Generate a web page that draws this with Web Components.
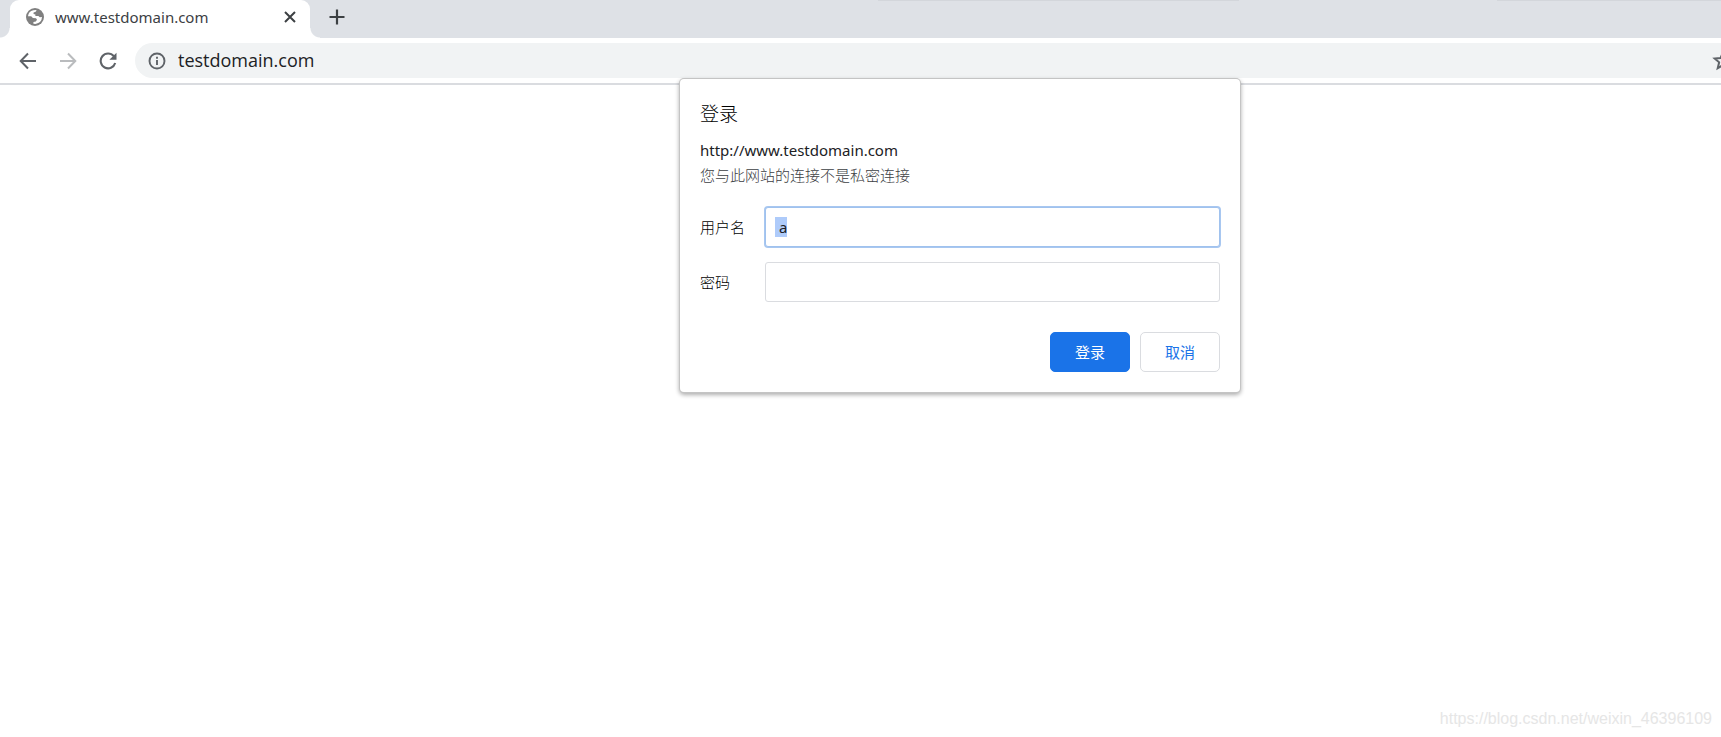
<!DOCTYPE html>
<html lang="zh-CN">
<head>
<meta charset="utf-8">
<title>www.testdomain.com</title>
<style>
html, body { height: 100%; margin: 0; }
body { background: #fff; color: #202124; overflow: hidden; font-family: "Open Sans", "Noto Sans CJK SC", sans-serif; }
</style>
</head>
<body>
<browser-window>
  <tab-strip slot="tabs"><browser-tab>www.testdomain.com</browser-tab></tab-strip>
  <nav-toolbar slot="toolbar" url="testdomain.com"></nav-toolbar>
  <login-dialog></login-dialog>
  <page-credit slot="credit">https://blog.csdn.net/weixin_46396109</page-credit>
</browser-window>
<script>
const define = (name, html, setup) => customElements.define(name, class extends HTMLElement {
  constructor() {
    super();
    this.attachShadow({ mode: 'open' }).innerHTML = html;
  }
  connectedCallback() { if (setup) setup(this, this.shadowRoot); }
});

define('browser-window', `
<style>
:host { display: flex; flex-direction: column; min-height: 100vh; position: relative; overflow: hidden; }
main { flex: 1; display: flex; flex-direction: column; justify-content: flex-end; align-items: flex-end; }
</style>
<slot name="tabs"></slot>
<slot name="toolbar"></slot>
<main><slot></slot><slot name="credit"></slot></main>`);

define('tab-strip', `
<style>
:host { display: flex; height: 38px; padding-left: 10px; background: #dee1e6; position: relative; }
button { border: 0; padding: 0; background: none; width: 36px; height: 34px; margin-left: 9px; display: grid; place-items: center; }
.edge { position: absolute; top: 0; height: 1px; background: #d3d6db; }
.one { left: 51%; width: 21%; }
.two { left: 87%; right: 0; }
</style>
<slot></slot>
<button aria-label="新标签页"><svg width="16" height="16" viewBox="0 0 16 16"><path d="M8 .5v15M.5 8h15" stroke="#3c4043" stroke-width="2.2"/></svg></button>
<div class="edge one"></div><div class="edge two"></div>`);

define('browser-tab', `
<style>
:host { display: flex; align-items: center; box-sizing: border-box; width: 300px; height: 38px; padding: 0 12px 4px 16px; background: #fff; border-radius: 9px 9px 0 0; position: relative; color: #3c4043; font-family: "Noto Sans", sans-serif; font-size: 15px; }
:host::before, :host::after { content: ""; position: absolute; bottom: 0; width: 10px; height: 10px; }
:host::before { right: 100%; background: radial-gradient(circle at 0 0, transparent 9px, #fff 10px); }
:host::after { left: 100%; background: radial-gradient(circle at 100% 0, transparent 9px, #fff 10px); }
span { flex: 1; margin-left: 11px; white-space: nowrap; }
button { border: 0; padding: 0; background: none; width: 16px; height: 16px; display: grid; place-items: center; }
</style>
<svg width="18" height="18" viewBox="0 0 18 18"><circle cx="9" cy="9" r="9" fill="#808080"/><path fill="#fff" d="M2 8.2Q2.5 3.4 7.3 2.2L10.2 2.1Q11 3 9.6 3.7L7.6 4.6Q7.1 5.7 8 6.3H9.3L9.4 8H12.4L13.8 9.2 16 9.1Q15.8 14.9 9.4 16.1L7.4 15.8V14L9.8 13.5 11 11.8 10 10.3 6.9 10 5.2 8.3Z"/></svg>
<span><slot></slot></span>
<button aria-label="关闭"><svg width="12" height="12" viewBox="0 0 12 12"><path d="m1 1 10 10M11 1 1 11" stroke="#3c4043" stroke-width="2"/></svg></button>`);

define('nav-toolbar', `
<style>
:host { display: flex; align-items: center; box-sizing: border-box; height: 47px; padding: 5px 0 5px 8px; border-bottom: 2px solid #dadce0; background: #fff; }
button { flex: none; border: 0; padding: 0; background: none; width: 40px; height: 34px; display: grid; place-items: center; color: #5f6368; }
button:disabled { color: #babcbe; }
.omnibox { flex: 1; display: flex; align-items: center; height: 35px; margin: 0 -14px 0 7px; padding-left: 13px; border-radius: 18px 0 0 18px; background: #f1f3f4; }
.omnibox svg { flex: none; }
input { flex: 1; min-width: 0; height: 34px; border: 0; outline: 0; background: none; padding: 0 0 2px; box-sizing: border-box; margin-left: 12px; font: 18px "Open Sans", "Noto Sans CJK SC", sans-serif; color: #202124; }
.star { width: 24px; }
</style>
<button aria-label="后退"><svg width="18" height="18" viewBox="0 0 18 18" fill="none" stroke="currentColor" stroke-width="2"><path d="M17 9H2M9 1.5 1.7 9 9 16.5"/></svg></button>
<button aria-label="前进" disabled><svg width="18" height="18" viewBox="0 0 18 18" fill="none" stroke="currentColor" stroke-width="2"><path d="M1 9h15M9 1.5 16.3 9 9 16.5"/></svg></button>
<button aria-label="重新加载"><svg width="18" height="18" viewBox="0 0 18 18"><path d="M14.8 4.2A7.4 7.4 0 1 0 16.2 11" fill="none" stroke="currentColor" stroke-width="2.1"/><path d="M17.5.7v7.1h-7.1z" fill="currentColor"/></svg></button>
<div class="omnibox">
<svg width="18" height="18" viewBox="0 0 18 18"><circle cx="9" cy="9" r="7.5" fill="none" stroke="#5f6368" stroke-width="1.9"/><path d="M9 8v5M9 4.7v2" stroke="#5f6368" stroke-width="1.9"/></svg>
<input type="text" aria-label="地址栏">
<button class="star" aria-label="为此标签页添加书签"><svg width="22" height="22" viewBox="0 0 20 20" fill="none" stroke="#5f6368" stroke-width="1.8"><path d="m10 2.2 2.2 5 5.4.5-4.1 3.5 1.3 5.4-4.8-2.9-4.8 2.9 1.3-5.4L2.4 7.7l5.4-.5z"/></svg></button>
</div>`, (host, root) => { root.querySelector('input').value = host.getAttribute('url'); });

define('login-dialog', `
<style>
:host { display: block; position: absolute; left: 680px; top: 79px; box-sizing: border-box; width: 560px; padding: 20px; background: #fff; border-radius: 4px; box-shadow: 0 0 0 1px #c4c4c4, 0 2px 4px 1px rgba(0,0,0,.32); font-size: 15px; line-height: 25px; }
h1 { margin: 0; padding-bottom: 9px; font-size: 19px; line-height: 30px; font-weight: 300; color: #000; }
p { margin: 0; line-height: 25px; }
.origin { font-family: "Noto Sans", sans-serif; }
.note { color: #3c4043; font-weight: 300; }
form { display: grid; grid-template-columns: 45px 1fr; column-gap: 20px; row-gap: 15px; align-items: center; margin-top: 19px; }
label { font-weight: 300; color: #000; }
input { box-sizing: border-box; width: 100%; height: 40px; padding: 0 9px; border: 1px solid #dadce0; border-radius: 3px; outline: 0; background: #fff; color: #202124; font: 15px "Noto Sans", "Noto Sans CJK SC", sans-serif; }
input:focus { border-color: #a0c2ee; box-shadow: 0 0 0 1px #a8c7f0; }
input::selection { background: #aecbfa; color: #202124; }
.actions { grid-column: 1 / -1; display: flex; justify-content: flex-end; gap: 10px; margin-top: 15px; }
button { width: 80px; height: 40px; padding: 0 0 2px; border: 1px solid #dadce0; border-radius: 5px; background: #fff; color: #1a73e8; font: 400 15px "Noto Sans CJK SC", sans-serif; }
.primary { border-color: #1a73e8; background: #1a73e8; color: #fff; }
</style>
<h1>登录</h1>
<p class="origin">http://www.testdomain.com</p>
<p class="note">您与此网站的连接不是私密连接</p>
<form>
<label for="user">用户名</label><input id="user" type="text" value=" a">
<label for="pass">密码</label><input id="pass" type="password">
<div class="actions"><button class="primary" type="submit">登录</button><button type="button">取消</button></div>
</form>`, (host, root) => { const user = root.getElementById('user'); user.focus(); user.select(); });

define('page-credit', `
<style>
:host { display: block; padding: 0 9px 7px 0; font: 16px/22px "Liberation Sans", sans-serif; color: #e6e6e6; }
</style>
<slot></slot>`);
</script>
</body>
</html>
